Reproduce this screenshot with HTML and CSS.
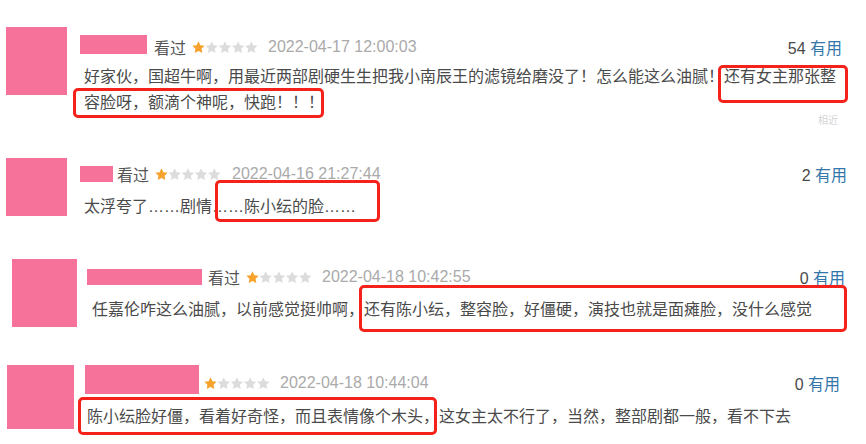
FILE: index.html
```html
<!DOCTYPE html>
<html lang="zh-CN">
<head>
    <meta charset="UTF-8">
    <meta name="viewport" content="width=device-width, initial-scale=1.0">
    <title>短评截图</title>
    <link rel="stylesheet" href="styles.css">
</head>
<body>
    <svg class="defs" width="0" height="0">
        <defs>
            <polygon id="star" points="6.5,0.3 8.38,4.21 12.68,4.79 9.54,7.79 10.32,12.06 6.5,10 2.68,12.06 3.46,7.79 0.32,4.79 4.62,4.21"/>
        </defs>
    </svg>

    <div class="board">

        <!-- 第一条 -->
        <div class="review r1">
            <div class="avatar"></div>
            <div class="main">
                <div class="meta">
                    <span class="name"></span>
                    <span class="status">看过</span>
                    <svg class="stars" width="66" height="13" viewBox="0 0 66 13">
                        <use href="#star" class="on"/>
                        <use href="#star" x="13.2"/>
                        <use href="#star" x="26.4"/>
                        <use href="#star" x="39.6"/>
                        <use href="#star" x="52.8"/>
                    </svg>
                    <span class="time">2022-04-17 12:00:03</span>
                    <span class="votes"><span class="count">54</span> <a href="#">有用</a></span>
                </div>
                <p class="text">好家伙，国超牛啊，用最近两部剧硬生生把我小南辰王的滤镜给磨没了！怎么能这么油腻！还有女主那张整容脸呀，额滴个神呢，快跑！！！</p>
            </div>
            <div class="cut">相近</div>
            <div class="mark m1a"></div>
            <div class="mark m1b"></div>
        </div>

        <!-- 第二条 -->
        <div class="review r2">
            <div class="avatar"></div>
            <div class="main">
                <div class="meta">
                    <span class="name"></span>
                    <span class="status">看过</span>
                    <svg class="stars" width="66" height="13" viewBox="0 0 66 13">
                        <use href="#star" class="on"/>
                        <use href="#star" x="13.2"/>
                        <use href="#star" x="26.4"/>
                        <use href="#star" x="39.6"/>
                        <use href="#star" x="52.8"/>
                    </svg>
                    <span class="time">2022-04-16 21:27:44</span>
                    <span class="votes"><span class="count">2</span> <a href="#">有用</a></span>
                </div>
                <p class="text">太浮夸了……剧情……陈小纭的脸……</p>
            </div>
            <div class="mark m2"></div>
        </div>

        <!-- 第三条 -->
        <div class="review r3">
            <div class="avatar"></div>
            <div class="main">
                <div class="meta">
                    <span class="name"></span>
                    <span class="status">看过</span>
                    <svg class="stars" width="66" height="13" viewBox="0 0 66 13">
                        <use href="#star" class="on"/>
                        <use href="#star" x="13.2"/>
                        <use href="#star" x="26.4"/>
                        <use href="#star" x="39.6"/>
                        <use href="#star" x="52.8"/>
                    </svg>
                    <span class="time">2022-04-18 10:42:55</span>
                    <span class="votes"><span class="count">0</span> <a href="#">有用</a></span>
                </div>
                <p class="text">任嘉伦咋这么油腻，以前感觉挺帅啊，还有陈小纭，整容脸，好僵硬，演技也就是面瘫脸，没什么感觉</p>
            </div>
            <div class="mark m3"></div>
        </div>

        <!-- 第四条 -->
        <div class="review r4">
            <div class="avatar"></div>
            <div class="main">
                <div class="meta">
                    <span class="name"></span>
                    <svg class="stars" width="66" height="13" viewBox="0 0 66 13">
                        <use href="#star" class="on"/>
                        <use href="#star" x="13.2"/>
                        <use href="#star" x="26.4"/>
                        <use href="#star" x="39.6"/>
                        <use href="#star" x="52.8"/>
                    </svg>
                    <span class="time">2022-04-18 10:44:04</span>
                    <span class="votes"><span class="count">0</span> <a href="#">有用</a></span>
                </div>
                <p class="text">陈小纭脸好僵，看着好奇怪，而且表情像个木头，这女主太不行了，当然，整部剧都一般，看不下去</p>
            </div>
            <div class="mark m4"></div>
        </div>

    </div>
</body>
</html>
```

FILE: styles.css
```css
* {
    box-sizing: border-box;
    margin: 0;
    padding: 0;
}

body {
    background: #fff;
    font-family: 'Liberation Sans', 'Noto Sans CJK SC', sans-serif;
    font-size: 16px;
    color: #4a4a4a;
    overflow: hidden;
}

.defs {
    position: absolute;
}

.board {
    width: 866px;
    height: 444px;
}

/* one pasted comment */
.review {
    position: relative;
    display: flex;
    align-items: flex-start;
}

.avatar {
    flex: none;
    background: #f6729a;
}

.main {
    flex: 1;
    min-width: 0;
}

.meta {
    display: flex;
    align-items: center;
    height: 26px;
    white-space: nowrap;
}

.name {
    flex: none;
    height: 16px;
    margin-right: 6px;
    background: #f6729a;
}

.status {
    color: #555;
    margin-right: 6px;
}

.stars {
    flex: none;
    margin-right: 10px;
    fill: #dcdcdc;
}

.stars .on {
    fill: #f7a22c;
}

.time {
    color: #aaa;
}

.votes {
    margin-left: auto;
}

.votes .count {
    color: #494949;
}

.votes a {
    color: #37a;
    text-decoration: none;
}

.text {
    line-height: 26px;
}

/* red annotation boxes drawn on top */
.mark {
    position: absolute;
    border: 3px solid #f5221b;
    border-radius: 5px;
}

.cut {
    position: absolute;
    left: 818px;
    top: 115px;
    font-size: 10px;
    line-height: 12px;
    color: #d4d4d4;
}

/* first */
.r1 {
    height: 140px;
    padding: 0 24px 0 6px;
}

.r1 .avatar {
    width: 61px;
    height: 68px;
    margin-top: 27px;
}

.r1 .main {
    margin-left: 13px;
    padding-top: 34px;
}

.r1 .name {
    width: 67px;
    height: 19px;
    margin-right: 7px;
    align-self: flex-start;
    margin-top: 1px;
}

.r1 .text {
    margin-top: 4px;
    padding-left: 4px;
}

.m1a { left: 718px; top: 65px; width: 130px; height: 38px; }
.m1b { left: 73px; top: 88px; width: 251px; height: 30px; }

/* second */
.r2 {
    height: 100px;
    padding: 0 19px 0 6px;
}

.r2 .avatar {
    width: 61px;
    height: 58px;
    margin-top: 18px;
}

.r2 .main {
    margin-left: 13px;
    padding-top: 21px;
}

.r2 .name {
    width: 33px;
    margin-right: 4px;
}

.r2 .time {
    margin-left: 1px;
}

.r2 .text {
    margin-top: 7px;
    padding-left: 4px;
}

.m2 { left: 215px; top: 40px; width: 165px; height: 42px; }

/* third */
.r3 {
    height: 110px;
    padding: 0 21px 0 12px;
}

.r3 .avatar {
    width: 65px;
    height: 68px;
    margin-top: 19px;
}

.r3 .main {
    margin-left: 10px;
    padding-top: 24px;
}

.r3 .name {
    width: 115px;
}

.r3 .text {
    margin-top: 7px;
    padding-left: 5px;
}

.m3 { left: 359px; top: 45px; width: 488px; height: 47px; }

/* fourth */
.r4 {
    height: 94px;
    padding: 0 26px 0 7px;
}

.r4 .avatar {
    width: 67px;
    height: 64px;
    margin-top: 15px;
}

.r4 .main {
    margin-left: 11px;
    padding-top: 20px;
}

.r4 .name {
    width: 114px;
    height: 29px;
    margin-right: 5px;
    align-self: flex-start;
    margin-top: -5px;
}

.r4 .stars {
    margin-right: 10px;
}

.r4 .text {
    margin-top: 8px;
    padding-left: 2px;
}

.m4 { left: 78px; top: 47px; width: 359px; height: 38px; }
```
